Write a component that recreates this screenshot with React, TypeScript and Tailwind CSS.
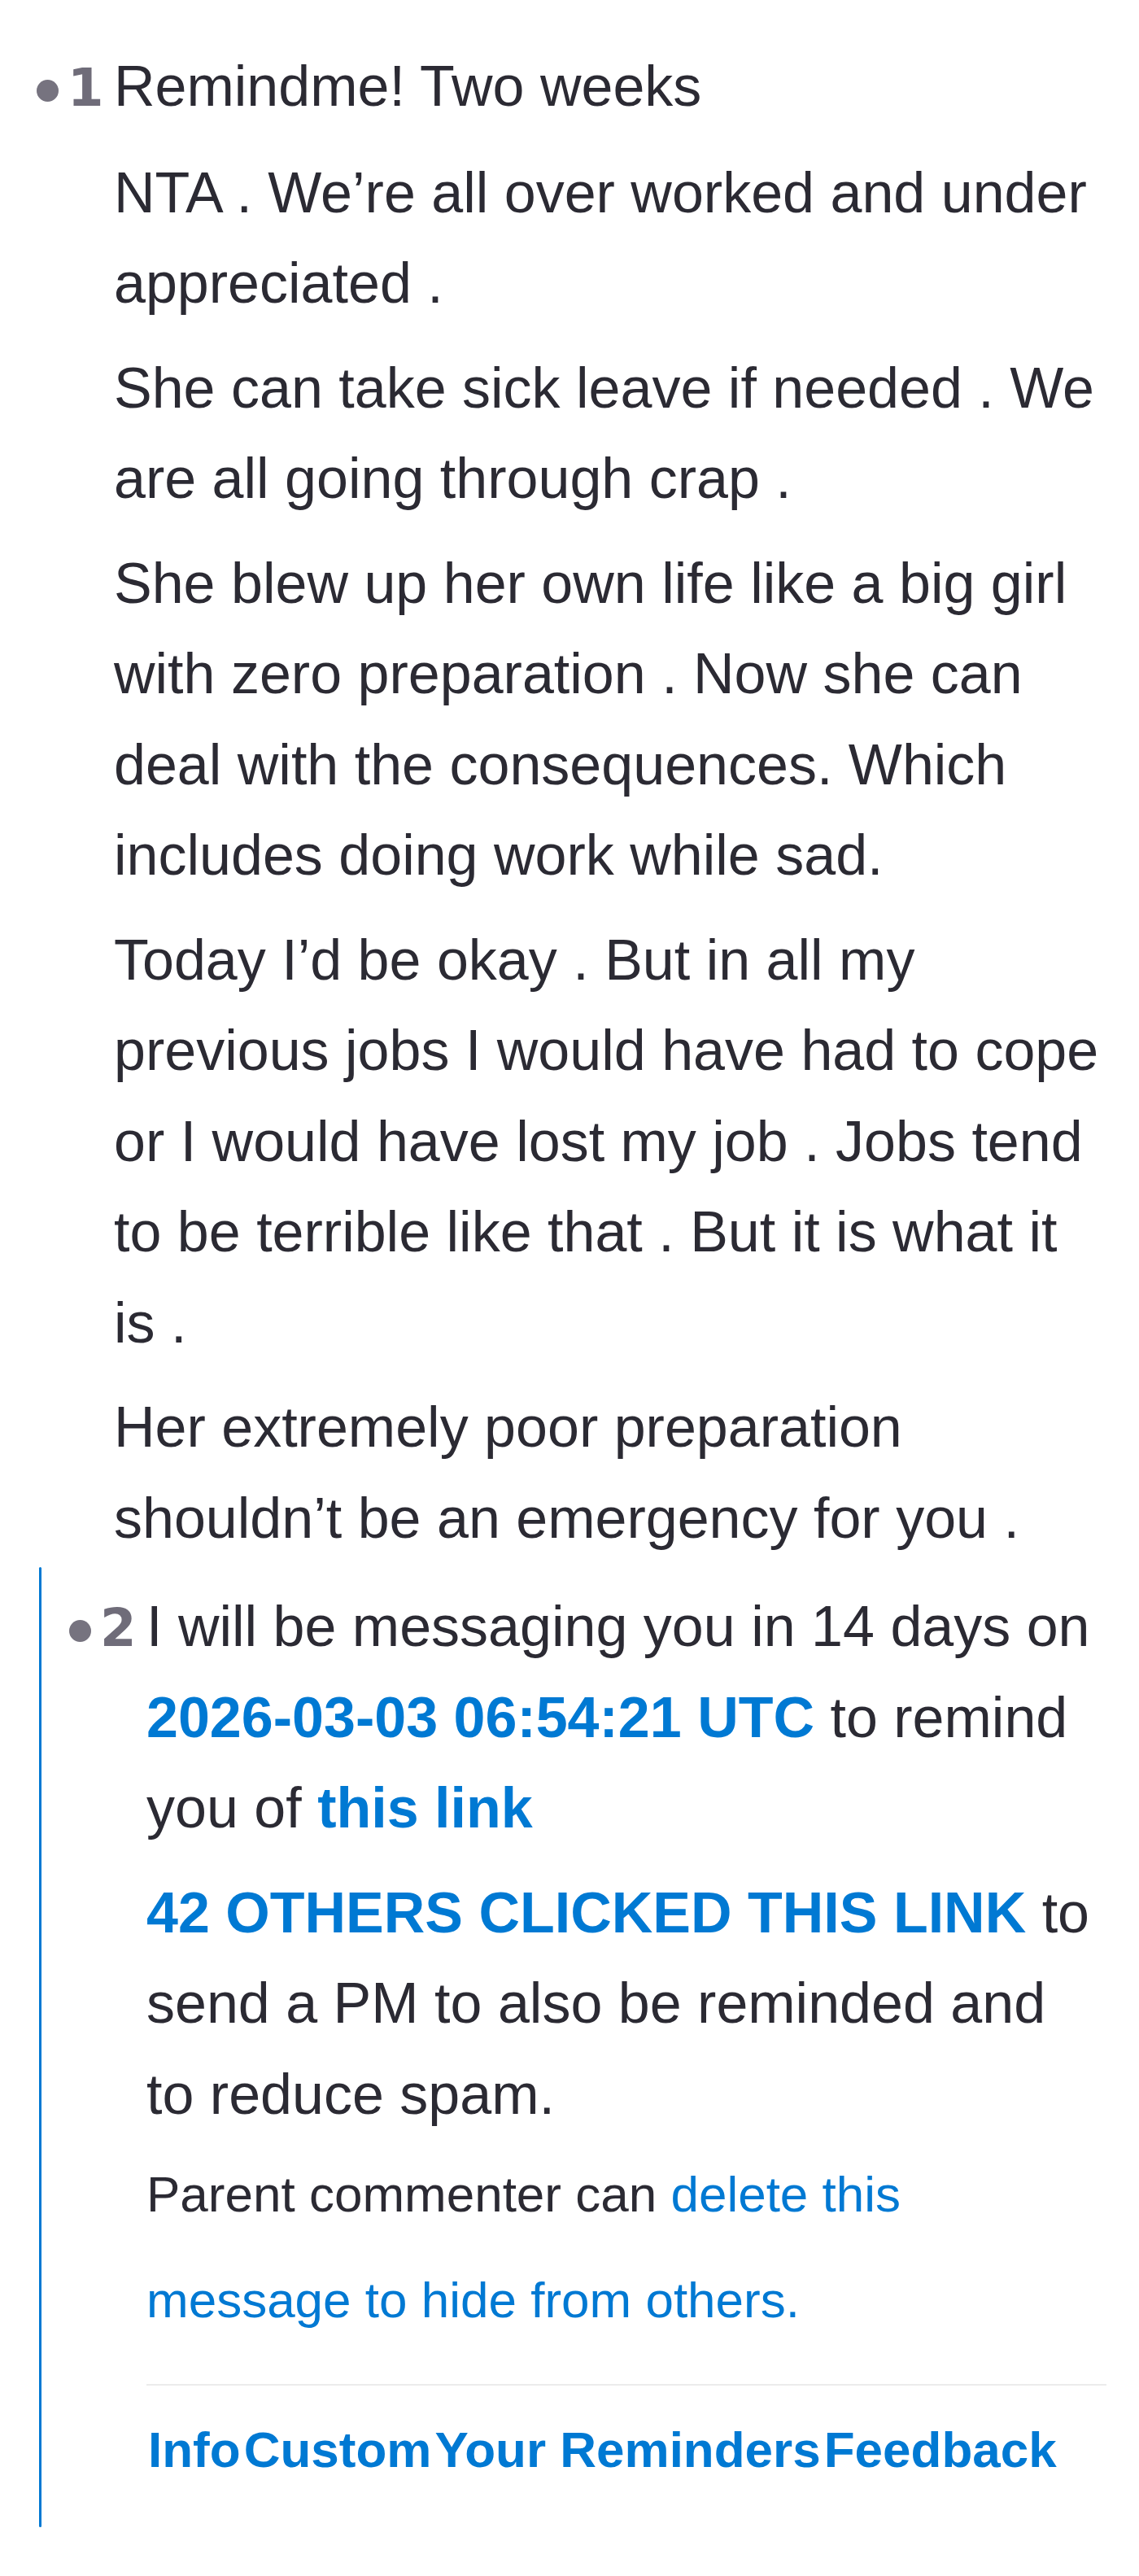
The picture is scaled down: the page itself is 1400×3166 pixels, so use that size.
const blue = "text-[#0079d3]";

function Marker({ n }: { n: number }) {
  return (
    <span className="w-[95px] shrink-0 whitespace-nowrap">
      <span className="inline-block size-[27px] rounded-full bg-[#76737f] align-middle" />
      <span className="ml-[11px] font-['DejaVu_Sans',sans-serif] text-[64px] font-bold text-[#6f6c79]">
        {n}
      </span>
    </span>
  );
}

function Para({ children }: { children: React.ReactNode }) {
  return <p className="mt-[17px] pl-[95px]">{children}</p>;
}

const footerLinks = ["Info", "Custom", "Your Reminders", "Feedback"];

export default function App() {
  return (
    <div className="min-h-screen bg-white pt-[51px] pr-[40px] pl-[45px] font-['Liberation_Sans',Arial,sans-serif] text-[70px] leading-[111.5px] text-[#2b2a33]">
      {/* comment 1 */}
      <div className="flex items-baseline">
        <Marker n={1} />
        <div className="flex-1">Remindme! Two weeks</div>
      </div>
      <Para>NTA . We’re all over worked and under appreciated .</Para>
      <Para>She can take sick leave if needed . We are all going through crap .</Para>
      <Para>
        She blew up her own life like a big girl with zero preparation . Now she can deal with the
        consequences. Which includes doing work while sad.
      </Para>
      <Para>
        Today I’d be okay . But in all my previous jobs I would have had to cope or I would have lost
        my job . Jobs tend to be terrible like that . But it is what it is .
      </Para>
      <Para>Her extremely poor preparation shouldn’t be an emergency for you .</Para>

      {/* comment 2 (reply) */}
      <div className="mt-[4px] ml-[3px] flex">
        <div className="w-[3px] shrink-0 rounded-full bg-[#0079d3]" />
        <div className="flex-1 pt-[18px] pb-[46px] pl-[34px]">
          <div className="flex items-baseline">
            <Marker n={2} />
            <div className="flex-1">
              I will be messaging you in 14 days on{" "}
              <a className={`font-bold ${blue}`}>2026-03-03 06:54:21 UTC</a> to remind you of{" "}
              <a className={`font-bold ${blue}`}>this link</a>
            </div>
          </div>
          <Para>
            <a className={`font-bold ${blue}`}>42 OTHERS CLICKED THIS LINK</a> to send a PM to also be
            reminded and to reduce spam.
          </Para>
          <p className="mt-[2px] pl-[95px] text-[62px] leading-[130px]">
            Parent commenter can{" "}
            <a className={blue}>delete this message to hide from others.</a>
          </p>
          <div className="mt-[38px] ml-[95px] h-[2px] bg-[#ececec]" />
          <div className="mt-[29px] flex pl-[95px] text-[62px] leading-[1.6] font-bold">
            {footerLinks.map((l) => (
              <a key={l} className={`px-[2px] ${blue}`}>
                {l}
              </a>
            ))}
          </div>
        </div>
      </div>
    </div>
  );
}
